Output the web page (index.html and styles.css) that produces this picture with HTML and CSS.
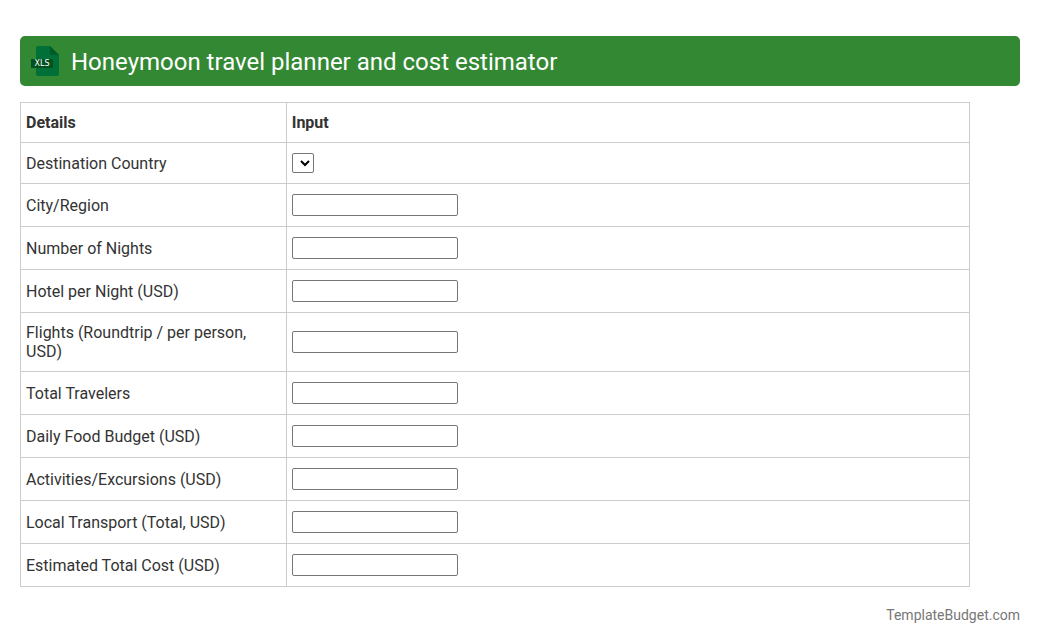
FILE: index.html
```html
<!DOCTYPE html>
<html lang="en">
<head>
<meta charset="utf-8">
<title>Honeymoon travel planner and cost estimator</title>
<link rel="stylesheet" href="styles.css">
</head>
<body>
<header class="banner">
  <svg class="banner-icon" viewBox="0 1 32 32" aria-hidden="true">
    <path fill="#007038" d="M8 1H20L29 10V29Q29 31 27 31H8Q6 31 6 29V3Q6 1 8 1Z"/>
    <path fill="#005a28" d="M20 1L29 10H21Q20 10 20 9Z"/>
    <rect fill="#005020" x="1" y="14" width="22" height="9"/>
    <text class="icon-label" x="12" y="21" text-anchor="middle">XLS</text>
  </svg>
  <h1 class="banner-title">Honeymoon travel planner and cost estimator</h1>
</header>
<main>
  <table class="planner">
    <thead>
      <tr><th class="details" scope="col">Details</th><th scope="col">Input</th></tr>
    </thead>
    <tbody>
      <tr><td><label for="country">Destination Country</label></td><td><select class="field-select" id="country"></select></td></tr>
      <tr><td><label for="city">City/Region</label></td><td><input class="field" id="city" type="text"></td></tr>
      <tr><td><label for="nights">Number of Nights</label></td><td><input class="field" id="nights" type="text"></td></tr>
      <tr><td><label for="hotel">Hotel per Night (USD)</label></td><td><input class="field" id="hotel" type="text"></td></tr>
      <tr><td><label for="flights">Flights (Roundtrip / per person, USD)</label></td><td><input class="field" id="flights" type="text"></td></tr>
      <tr><td><label for="travelers">Total Travelers</label></td><td><input class="field" id="travelers" type="text"></td></tr>
      <tr><td><label for="food">Daily Food Budget (USD)</label></td><td><input class="field" id="food" type="text"></td></tr>
      <tr><td><label for="activities">Activities/Excursions (USD)</label></td><td><input class="field" id="activities" type="text"></td></tr>
      <tr><td><label for="transport">Local Transport (Total, USD)</label></td><td><input class="field" id="transport" type="text"></td></tr>
      <tr><td><label for="total">Estimated Total Cost (USD)</label></td><td><input class="field" id="total" type="text"></td></tr>
    </tbody>
  </table>
</main>
<footer class="credit">TemplateBudget.com</footer>
</body>
</html>
```
FILE: styles.css
```css
* {
  box-sizing: border-box;
}

body {
  margin: 0;
  padding: 36px 20px 20px;
  background: #fff;
  color: #333;
  font: 16px/19px Roboto, sans-serif;
}

.banner {
  display: flex;
  align-items: center;
  gap: 9px;
  padding: 10px 10px 8px;
  border-radius: 5px;
  background: #338833;
  color: #fff;
}

.banner-icon {
  flex: none;
  width: 32px;
  height: 32px;
}

.icon-label {
  fill: #fff;
  font: 8px/8px "DejaVu Sans", sans-serif;
}

.banner-title {
  margin: 0;
  font-size: 24px;
  font-weight: 400;
  line-height: 32px;
}

.planner {
  width: 95%;
  margin-top: 16px;
  border-collapse: collapse;
}

.planner th,
.planner td {
  padding: 10px 5px;
  border: 1px solid #ccc;
  text-align: left;
  vertical-align: middle;
}

.planner th {
  font-weight: 700;
}

.planner .details {
  width: 28%;
}

.field,
.field-select {
  display: block;
  margin: 0;
  border: 1px solid #767676;
  border-radius: 2px;
  background: #fff;
}

.field {
  width: 166px;
  height: 22px;
  padding: 1px 2px;
  font: 14px Roboto, sans-serif;
}

.field-select {
  width: 22px;
  height: 20px;
}

.credit {
  margin-top: 19px;
  color: #777;
  font-size: 14px;
  text-align: right;
}
```
